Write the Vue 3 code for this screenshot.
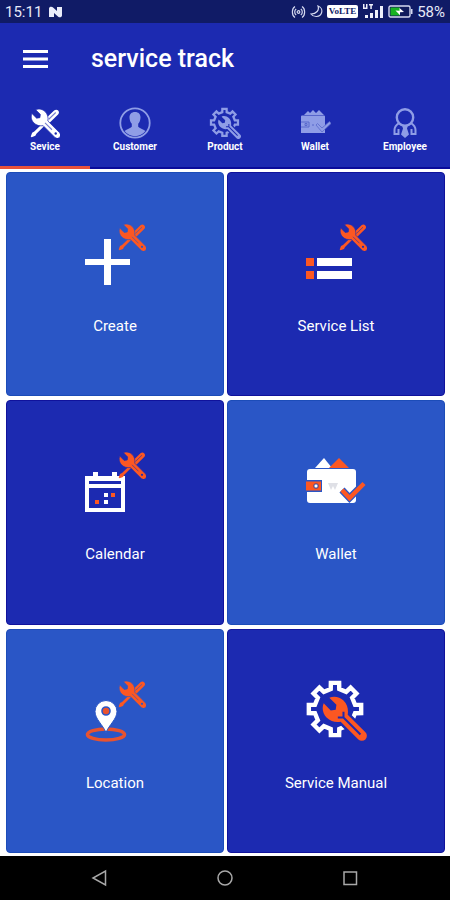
<script setup>
import { ref } from 'vue'

const tabs = [
  { id: 'service', label: 'Sevice' },
  { id: 'customer', label: 'Customer' },
  { id: 'product', label: 'Product' },
  { id: 'wallet', label: 'Wallet' },
  { id: 'employee', label: 'Employee' },
]

const tiles = [
  { id: 'create', label: 'Create', light: true, tools: true },
  { id: 'list', label: 'Service List', light: false, tools: true },
  { id: 'calendar', label: 'Calendar', light: false, tools: true },
  { id: 'wallet', label: 'Wallet', light: true, tools: false },
  { id: 'location', label: 'Location', light: true, tools: true },
  { id: 'manual', label: 'Service Manual', light: false, tools: false },
]

const activeTab = ref('service')

// outline of an 8-tooth gear centred on c
function gearPath(c, outer, inner) {
  const points = []
  for (let i = 0; i < 8; i++) {
    const steps = [[-12, inner], [-9, outer], [9, outer], [12, inner]]
    for (const [offset, r] of steps) {
      const a = ((i * 45 + offset) * Math.PI) / 180
      points.push(`${(c + r * Math.sin(a)).toFixed(2)} ${(c - r * Math.cos(a)).toFixed(2)}`)
    }
  }
  return `M${points.join('L')}Z`
}

const gear = gearPath(30, 26.5, 20.5)

// upright wrench, head centred on 0,0
const wrench =
  'M-5 38V13C-9 10-12 6-12 0-12-5-9-10-4-12V-2L0 1 4-2V-12C9-10 12-5 12 0 12 6 9 10 5 13V38A5 5 0 0 1-5 38Z'
</script>

<template>
  <div class="app">
    <svg class="defs" aria-hidden="true">
      <symbol id="tools" viewBox="0 0 28 28">
        <g fill="currentColor">
          <path d="M14 10.5L22.5 2.3c1.3-1.1 2.9-.9 3.8.1 1 1 1 2.5-.1 3.6L17.8 14.300z" />
          <path d="M15 11.5l1.800 1.800L6 24l-1 2-3.500 1.300-.8-.8L2 23l2-1z" />
        </g>
        <path class="cutout" transform="translate(8.8 8.6) rotate(-45) scale(.62)" :d="wrench" />
        <circle class="hole" cx="24" cy="23.8" r="1.1" />
        <path class="groove" d="M17.5 10.5l6.500-6.300M14 13.800l6.500 6.500" />
      </symbol>
      <symbol id="gear" viewBox="0 0 62 64">
        <path :d="gear" fill="none" stroke="currentColor" stroke-width="4.4" />
      </symbol>
      <symbol id="gear-wrench" viewBox="0 0 62 64">
        <g transform="translate(30 30) rotate(-45)">
          <path class="wide-gap" :d="wrench" />
          <path class="wrench" :d="wrench" />
          <path class="slot" d="M0 12v24M0 12l-4-4M0 12l4-4" />
        </g>
      </symbol>
    </svg>

    <header class="header">
      <div class="status">
        <span class="clock">15:11</span>
        <svg class="logo" width="15" height="12" viewBox="0 0 15 12">
          <path d="M1 11V2.5C1 .8 3.5.2 4.800 1.300L9 5V1h5v8.500c0 1.700-2.500 2.300-3.800 1.200L6 7v4z" fill="#e9ecfa" />
        </svg>
        <span class="spacer"></span>
        <svg width="15" height="14" viewBox="0 0 15 14" fill="none" stroke="#d5d9f0" stroke-width="1.2">
          <path d="M4 1.5C.5 3.5.5 10.5 4 12.5M11 1.5c3.5 2 3.5 9 0 11M5.2 4c-2 1.5-2 4.5 0 6M9.8 4c2 1.5 2 4.5 0 6" />
          <circle cx="7.5" cy="7" r="1.3" />
        </svg>
        <svg width="13" height="13" viewBox="0 0 13 13">
          <path d="M8 1c1.5 4-1.5 8-7 8 2.5 3.5 9 3.5 10.5-1C12.5 5 11 2 8 1z" fill="none" stroke="#d5d9f0" stroke-width="1.2" />
        </svg>
        <span class="volte">VoLTE</span>
        <svg width="22" height="15" viewBox="0 0 22 15" fill="#eef0fb">
          <path d="M1 0h1.5v3.5H4V0h1.5v5H1zM7 0h4v1.5H9.8V5H8.3V1.5H7z" />
          <path d="M3 11h3v3H3zM8 9h3v5H8zM13 6h3v8h-3zM18 2h3v12h-3z" />
        </svg>
        <svg width="25" height="13" viewBox="0 0 25 13">
          <rect x="1" y="1" width="21" height="11" rx="1.5" fill="#101a5c" stroke="#d5d9f0" stroke-width="1.4" />
          <path d="M23 4h1.5v5H23z" fill="#d5d9f0" />
          <path d="M2.5 2.5H12v8H2.5z" fill="#16b321" />
          <path d="M7.5 5.5l4 .3V3l4.500 4-4 .2v3z" fill="#fff" />
        </svg>
        <span class="percent">58%</span>
      </div>

      <div class="toolbar">
        <button class="menu-btn" aria-label="Menu">
          <svg width="25" height="18" viewBox="0 0 25 18">
            <path d="M0 1.5h25M0 9h25M0 16.5h25" stroke="#fff" stroke-width="2.8" />
          </svg>
        </button>
        <h1>service track</h1>
      </div>

      <nav class="tabs" role="tablist">
        <button
          v-for="tab in tabs"
          :key="tab.id"
          class="tab"
          :class="{ active: tab.id === activeTab }"
          role="tab"
          :aria-selected="tab.id === activeTab"
          @click="activeTab = tab.id"
        >
          <svg width="32" height="32" viewBox="0 0 32 32">
            <use v-if="tab.id === 'service'" href="#tools" x="1" y="1" width="30" height="30" />
            <g v-else-if="tab.id === 'customer'">
              <circle cx="16" cy="16" r="14.7" fill="none" stroke="currentColor" stroke-width="1.8" />
              <path d="M16 5c-4 0-6 2.800-5.400 6.500.2 2.200 1 4 2.200 5.200v3c-1.300 1.800-4.800 2-7.300 4.300a13.200 13.200 0 0 0 21 0c-2.500-2.300-6-2.500-7.300-4.300v-3c1.200-1.200 2-3 2.200-5.200C22 7.800 20 5 16 5z" fill="currentColor" />
            </g>
            <g v-else-if="tab.id === 'product'">
              <use href="#gear" width="32" height="33" />
              <use href="#gear-wrench" width="32" height="33" />
            </g>
            <g v-else-if="tab.id === 'wallet'" fill="currentColor">
              <path d="M5 8l4-4 2 2 3-3 3 3 3-3 5 5z" />
              <path d="M3 8.5h22a1 1 0 0 1 1 1V26H2V9.500a1 1 0 0 1 1-1z" />
              <path d="M17 18l1.5-1.5 4.500 4.500 7.500-6.500 1.500 2-9 8.500z" stroke="#5969cc" stroke-width=".8" />
              <path d="M2 15h8v5H2M6 16.5h2v2H6zM13 18h2" fill="none" stroke="#5969cc" />
            </g>
            <g v-else fill="none" stroke="currentColor" stroke-width="2.4">
              <circle cx="16" cy="10.5" r="8.2" />
              <path d="M10 16c-3 2-4.500 4-4.500 7v4h4v-5M22 16c3 2 4.500 4 4.500 7v4h-4v-5" stroke-width="2" />
              <path d="M13 18.5h6l-1 3 2 6-4 3.500-4-3.500 2-6z" fill="currentColor" stroke="none" />
            </g>
          </svg>
          <span>{{ tab.label }}</span>
        </button>
      </nav>
    </header>

    <main class="grid">
      <button v-for="tile in tiles" :key="tile.id" class="tile" :class="{ light: tile.light }">
        <svg width="62" height="64" viewBox="0 0 62 64">
          <path v-if="tile.id === 'create'" d="M20 17h7v20h19v6H27v20h-7V43H1v-6h19z" fill="#fff" />
          <g v-else-if="tile.id === 'list'">
            <path d="M1 36h8v8H1zM1 49h8v8H1z" fill="#fc5722" />
            <path d="M12 36h35v8H12zM12 49h35v8H12z" fill="#fff" />
          </g>
          <g v-else-if="tile.id === 'calendar'">
            <path d="M1 26h8v-4h5v4h14v-4h5v4h8v36H1zM5 31v3h32v-3zM5 38v20h32V38z" fill="#fff" fill-rule="evenodd" />
            <path d="M20 43h4v4h-4zM20 50h4v4h-4z" fill="#fff" />
            <path d="M27 43h4v4h-4zM11 50h4v4h-4z" fill="#fc5722" />
          </g>
          <g v-else-if="tile.id === 'wallet'">
            <path d="M10 18l9-10 8 10z" fill="#fff" />
            <path d="M24 18l10-10 10 10z" fill="#fc5722" />
            <rect x="2" y="19" width="49" height="34" rx="3" fill="#fff" />
            <path d="M0 30h17v12H0z" fill="#2a56c6" />
            <path d="M1 31.5h15v9H1z" fill="#fc5722" />
            <rect x="9" y="34" width="4" height="4" rx="1" fill="#fff" stroke="#2a3f9c" />
            <path d="M23 33l3 7 2-4 2 4 3-7z" fill="#dfe0e6" />
            <path d="M37 40l7.5 8L59 33.5" fill="none" stroke="#2a56c6" stroke-width="7" />
            <path d="M37 40l7.5 8L59 33.5" fill="none" stroke="#fc5722" stroke-width="4.4" />
          </g>
          <g v-else-if="tile.id === 'location'">
            <ellipse cx="22" cy="55.5" rx="18.5" ry="5.5" fill="none" stroke="#e8532f" stroke-width="3.6" />
            <path
              d="M22 53.5C19 46 11 40 11 32.5a11 11 0 0 1 22 0C33 40 25 46 22 53.5z"
              fill="#fff"
              stroke="#2a56c6"
              stroke-width="1"
            />
            <circle cx="22" cy="32" r="4" fill="#e8532f" stroke="#2a56c6" stroke-width="1.6" />
          </g>
          <g v-else class="manual">
            <use href="#gear" width="62" height="64" />
            <use class="accent" href="#gear-wrench" width="62" height="64" />
          </g>
          <use v-if="tile.tools" class="accent" href="#tools" x="34" y="1" width="28" height="28" />
        </svg>
        <span>{{ tile.label }}</span>
      </button>
    </main>

    <footer class="nav">
      <button aria-label="Back">
        <svg width="18" height="18" viewBox="0 0 18 18"><path d="M14.5 2v14L2 9z" /></svg>
      </button>
      <button aria-label="Home">
        <svg width="18" height="18" viewBox="0 0 18 18"><circle cx="9" cy="9" r="7" /></svg>
      </button>
      <button aria-label="Recent apps">
        <svg width="18" height="18" viewBox="0 0 18 18"><path d="M3 3h12.5v12.5H3z" /></svg>
      </button>
    </footer>
  </div>
</template>

<style>
body {
  margin: 0;
  background: #fff;
}
</style>

<style scoped>
.app {
  display: flex;
  flex-direction: column;
  min-height: 100vh;
  font-family: Roboto, 'Liberation Sans', sans-serif;
  color: #fff;
}

.defs {
  position: absolute;
  width: 0;
  height: 0;
}

button {
  border: none;
  padding: 0;
  background: none;
  font: inherit;
  color: inherit;
  cursor: pointer;
}

.header {
  --bg: #1c2ab1;
  background: #1c2ab1;
}

.status {
  display: flex;
  align-items: center;
  gap: 4px;
  height: 23px;
  padding: 0 5px;
  background: #101b66;
  font-size: 15px;
  color: #e6e9f8;
}

.logo {
  margin-left: 2px;
}

.spacer {
  flex: 1;
}

.volte {
  padding: 0 2px;
  border-radius: 2px;
  background: #fff;
  color: #101b66;
  font: bold 9px/13px 'Liberation Serif', serif;
}

.toolbar {
  display: flex;
  align-items: center;
  height: 71px;
}

.menu-btn {
  display: flex;
  width: 91px;
  padding: 12px 23px;
  box-sizing: border-box;
}

.toolbar h1 {
  margin: 0;
  font-size: 25px;
  font-weight: 500;
}

.tabs {
  display: grid;
  grid-template-columns: repeat(5, 1fr);
  height: 75px;
}

.tab {
  display: flex;
  flex-direction: column;
  align-items: center;
  padding-top: 13px;
  border-bottom: 2px solid #0a0b9a;
  font-size: 10px;
  font-weight: 700;
  line-height: 15px;
}

.tab svg {
  color: #8f9de6;
}

.tab.active svg {
  color: #fff;
}

.tab.active {
  border-bottom: 3px solid #e9523b;
}

.cutout {
  fill: currentColor;
  stroke: var(--bg);
  stroke-width: 1;
}

.hole {
  fill: var(--bg);
}

.groove {
  fill: none;
  stroke: var(--bg);
  stroke-width: 1;
  opacity: 0.6;
}

.wide-gap {
  fill: var(--bg);
  stroke: var(--bg);
  stroke-width: 5;
}

.wrench {
  fill: currentColor;
}

.slot {
  fill: none;
  stroke: var(--bg);
  stroke-width: 2;
}

.grid {
  flex: 1;
  display: grid;
  grid-template-columns: 1fr 1fr;
  grid-auto-rows: 1fr;
  gap: 4px 3px;
  padding: 3px 5px 3px 6px;
}

.tile {
  --bg: #1c2ab1;
  display: flex;
  flex-direction: column;
  align-items: center;
  gap: 30px;
  padding: 49px 0;
  border: 1px solid #10129c;
  border-radius: 4px;
  background: #1c2ab1;
  font-size: 15px;
  line-height: 20px;
}

.tile.light {
  --bg: #2a56c6;
  border-color: #1c4cb8;
  background: #2a56c6;
}

.accent {
  color: #fc5722;
}

.manual {
  color: #fff;
}

.nav {
  display: grid;
  grid-template-columns: repeat(3, 1fr);
  height: 44px;
  padding: 0 37px;
  background: #000;
}

.nav button {
  display: flex;
  align-items: center;
  justify-content: center;
}

.nav svg {
  fill: none;
  stroke: #a8a8a8;
  stroke-width: 1.5;
}
</style>
